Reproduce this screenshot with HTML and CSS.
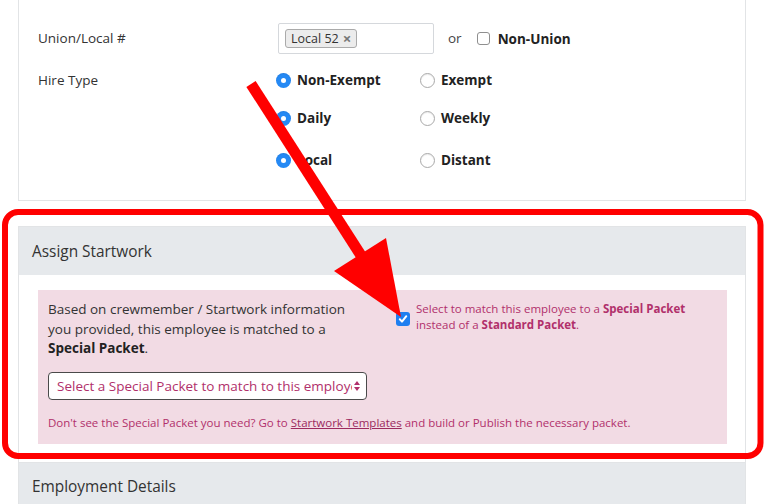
FILE: index.html
```html
<!DOCTYPE html>
<html>
<head lang="en">
    <meta charset="UTF-8">
    <title>Startwork</title>
    <link rel="stylesheet" href="styles.css">
</head>
<body>
<div class="page">
    <div class="card card-top">
        <div class="field-row union-row">
            <div class="field-label">Union/Local #</div>
            <div class="union-value">
                <div class="tag-input">
                    <span class="tag">Local 52 <span class="tag-x">&times;</span></span>
                </div>
                <span class="or">or</span>
                <span class="checkbox"></span>
                <span class="opt-label">Non-Union</span>
            </div>
        </div>
        <div class="field-row hire-row">
            <div class="field-label">Hire Type</div>
            <div class="radio-grid">
                <div class="radio-line">
                    <div class="radio-opt"><span class="radio on"></span><span class="opt-label">Non-Exempt</span></div>
                    <div class="radio-opt"><span class="radio"></span><span class="opt-label">Exempt</span></div>
                </div>
                <div class="radio-line line-2">
                    <div class="radio-opt"><span class="radio on"></span><span class="opt-label">Daily</span></div>
                    <div class="radio-opt"><span class="radio"></span><span class="opt-label">Weekly</span></div>
                </div>
                <div class="radio-line line-3">
                    <div class="radio-opt"><span class="radio on"></span><span class="opt-label">Local</span></div>
                    <div class="radio-opt"><span class="radio"></span><span class="opt-label">Distant</span></div>
                </div>
            </div>
        </div>
    </div>

    <div class="card card-startwork">
        <div class="card-head">Assign Startwork</div>
        <div class="card-body">
            <div class="packet-box">
                <div class="packet-top">
                    <div class="packet-info">
                        Based on crewmember / Startwork information you provided, this employee is matched to a <b>Special Packet</b>.
                    </div>
                    <div class="packet-check">
                        <span class="checkbox checked">
                            <svg width="10" height="10" viewBox="0 0 10 10"><path d="M1.8 5.3 L4 7.6 L8.3 2.2" fill="none" stroke="#fff" stroke-width="2" stroke-linecap="round" stroke-linejoin="round"/></svg>
                        </span>
                        <span class="check-text">Select to match this employee to a <b>Special Packet</b> instead of a <b>Standard Packet</b>.</span>
                    </div>
                </div>
                <div class="packet-select">
                    <span class="select-text">Select a Special Packet to match to this employee</span>
                    <svg class="select-arrows" width="8" height="12" viewBox="0 0 8 12"><path d="M4 1 L7 5 L1 5 Z M4 11 L7 7 L1 7 Z" fill="#b1306b"/></svg>
                </div>
                <div class="packet-note">
                    Don't see the Special Packet you need? Go to <a href="#">Startwork Templates</a> and build or Publish the necessary packet.
                </div>
            </div>
        </div>
    </div>

    <div class="card card-employment">
        <div class="card-head">Employment Details</div>
    </div>

    <svg class="annotation" width="766" height="504" viewBox="0 0 766 504">
        <rect x="5" y="212" width="755.5" height="244" rx="13" fill="none" stroke="#ff0000" stroke-width="6"/>
        <line x1="251" y1="84" x2="362" y2="257" stroke="#ff0000" stroke-width="11"/>
        <polygon points="334,271 386,238 401,317" fill="#ff0000"/>
    </svg>
</div>
</body>
</html>
```

FILE: styles.css
```css
body{
    margin: 0;
    padding: 0;
    background: #fff;
    font-family: "Open Sans", "Liberation Sans", Arial, sans-serif;
    color: #333;
}
.page{
    position: relative;
    width: 766px;
    height: 504px;
    overflow: hidden;
    padding: 0 20px 0 18px;
    box-sizing: border-box;
}
.card{
    border: 1px solid #e2e4e6;
    background: #fff;
}
.card-top{
    border-top: none;
    padding: 23px 19px 30px 19px;
}
.field-row{
    display: grid;
    grid-template-columns: 238px 1fr;
}
.field-label{
    font-size: 13.5px;
    color: #333;
}
.union-row .field-label{
    align-self: center;
    padding-bottom: 2px;
}
.union-value{
    display: flex;
    align-items: center;
    padding-left: 2px;
}
.tag-input{
    display: flex;
    align-items: flex-start;
    width: 156px;
    height: 31px;
    box-sizing: border-box;
    border: 1px solid #d5d8dc;
    border-radius: 2px;
    padding: 5px 6px;
}
.tag{
    display: flex;
    align-items: center;
    height: 19px;
    box-sizing: border-box;
    padding: 0 5px 1px 5px;
    background: #ececec;
    border: 1px solid #aaa;
    border-radius: 3px;
    font-size: 12.5px;
    color: #333;
}
.tag-x{
    color: #777;
    font-weight: bold;
    font-size: 15px;
    line-height: 15px;
    margin-left: 4px;
}
.or{
    font-size: 13.5px;
    color: #444;
    margin-left: 14px;
    margin-bottom: 2px;
}
.checkbox{
    display: inline-block;
    width: 13px;
    height: 13px;
    box-sizing: border-box;
    border: 1px solid #8f8f8f;
    border-radius: 3px;
    background: #fff;
    margin-left: 15px;
}
.opt-label{
    font-size: 13.5px;
    font-weight: bold;
    color: #222;
    margin-left: 8px;
}
.hire-row{
    margin-top: 16px;
}
.hire-row .field-label{
    line-height: 20px;
}
.radio-line{
    display: flex;
    height: 20px;
}
.line-2{
    margin-top: 18px;
}
.line-3{
    margin-top: 22px;
}
.radio-opt{
    display: flex;
    align-items: center;
    width: 144px;
}
.radio-opt .opt-label{
    margin-left: 6px;
}
.radio{
    position: relative;
    width: 15px;
    height: 15px;
    box-sizing: border-box;
    border-radius: 50%;
    border: 1px solid #a9a9a9;
    background: #fff;
    box-shadow: inset 0 1px 1px rgba(0,0,0,0.08);
}
.radio.on{
    border: none;
    background: #2589f4;
}
.radio.on:after{
    content: "";
    position: absolute;
    left: 5px;
    top: 5px;
    width: 5px;
    height: 5px;
    border-radius: 50%;
    background: #fff;
}
.card-startwork{
    margin-top: 25px;
}
.card-head{
    height: 48px;
    display: flex;
    align-items: center;
    padding: 0 13px;
    background: #e6e9ec;
    font-size: 15.4px;
    color: #333;
}
.card-body{
    padding: 15px 18px 18px 19px;
}
.packet-box{
    background: #f2dbe4;
    padding: 10px 10px 12px 10px;
}
.packet-top{
    display: flex;
}
.packet-info{
    width: 310px;
    margin-right: 20px;
    font-size: 13.5px;
    line-height: 19.5px;
    color: #333;
}
.packet-info b{
    color: #222;
}
.packet-check{
    display: flex;
    margin-left: 18px;
    padding-top: 1px;
}
.checkbox.checked{
    flex: none;
    margin: 11px 0 0 0;
    width: 14px;
    height: 14px;
    border: none;
    background: #1f7ff0;
    display: flex;
    align-items: center;
    justify-content: center;
}
.check-text{
    margin-left: 6px;
    font-size: 11.5px;
    line-height: 16px;
    color: #b1306b;
    width: 300px;
}
.packet-select{
    margin-top: 13px;
    width: 319px;
    height: 28px;
    box-sizing: border-box;
    border: 1px solid #4a4a4a;
    border-radius: 4px;
    background: #fff;
    display: flex;
    align-items: center;
    padding: 0 5px 0 8px;
}
.select-text{
    flex: 1;
    overflow: hidden;
    white-space: nowrap;
    font-size: 13.5px;
    color: #b1306b;
}
.select-arrows{
    flex: none;
    margin-left: 1px;
}
.packet-note{
    margin-top: 14px;
    font-size: 11.5px;
    line-height: 18px;
    color: #b1306b;
}
.packet-note a{
    color: #9c2a5e;
    text-decoration: underline;
}
.card-employment{
    border-top: none;
}
.annotation{
    position: absolute;
    left: 0;
    top: 0;
    pointer-events: none;
}
```
